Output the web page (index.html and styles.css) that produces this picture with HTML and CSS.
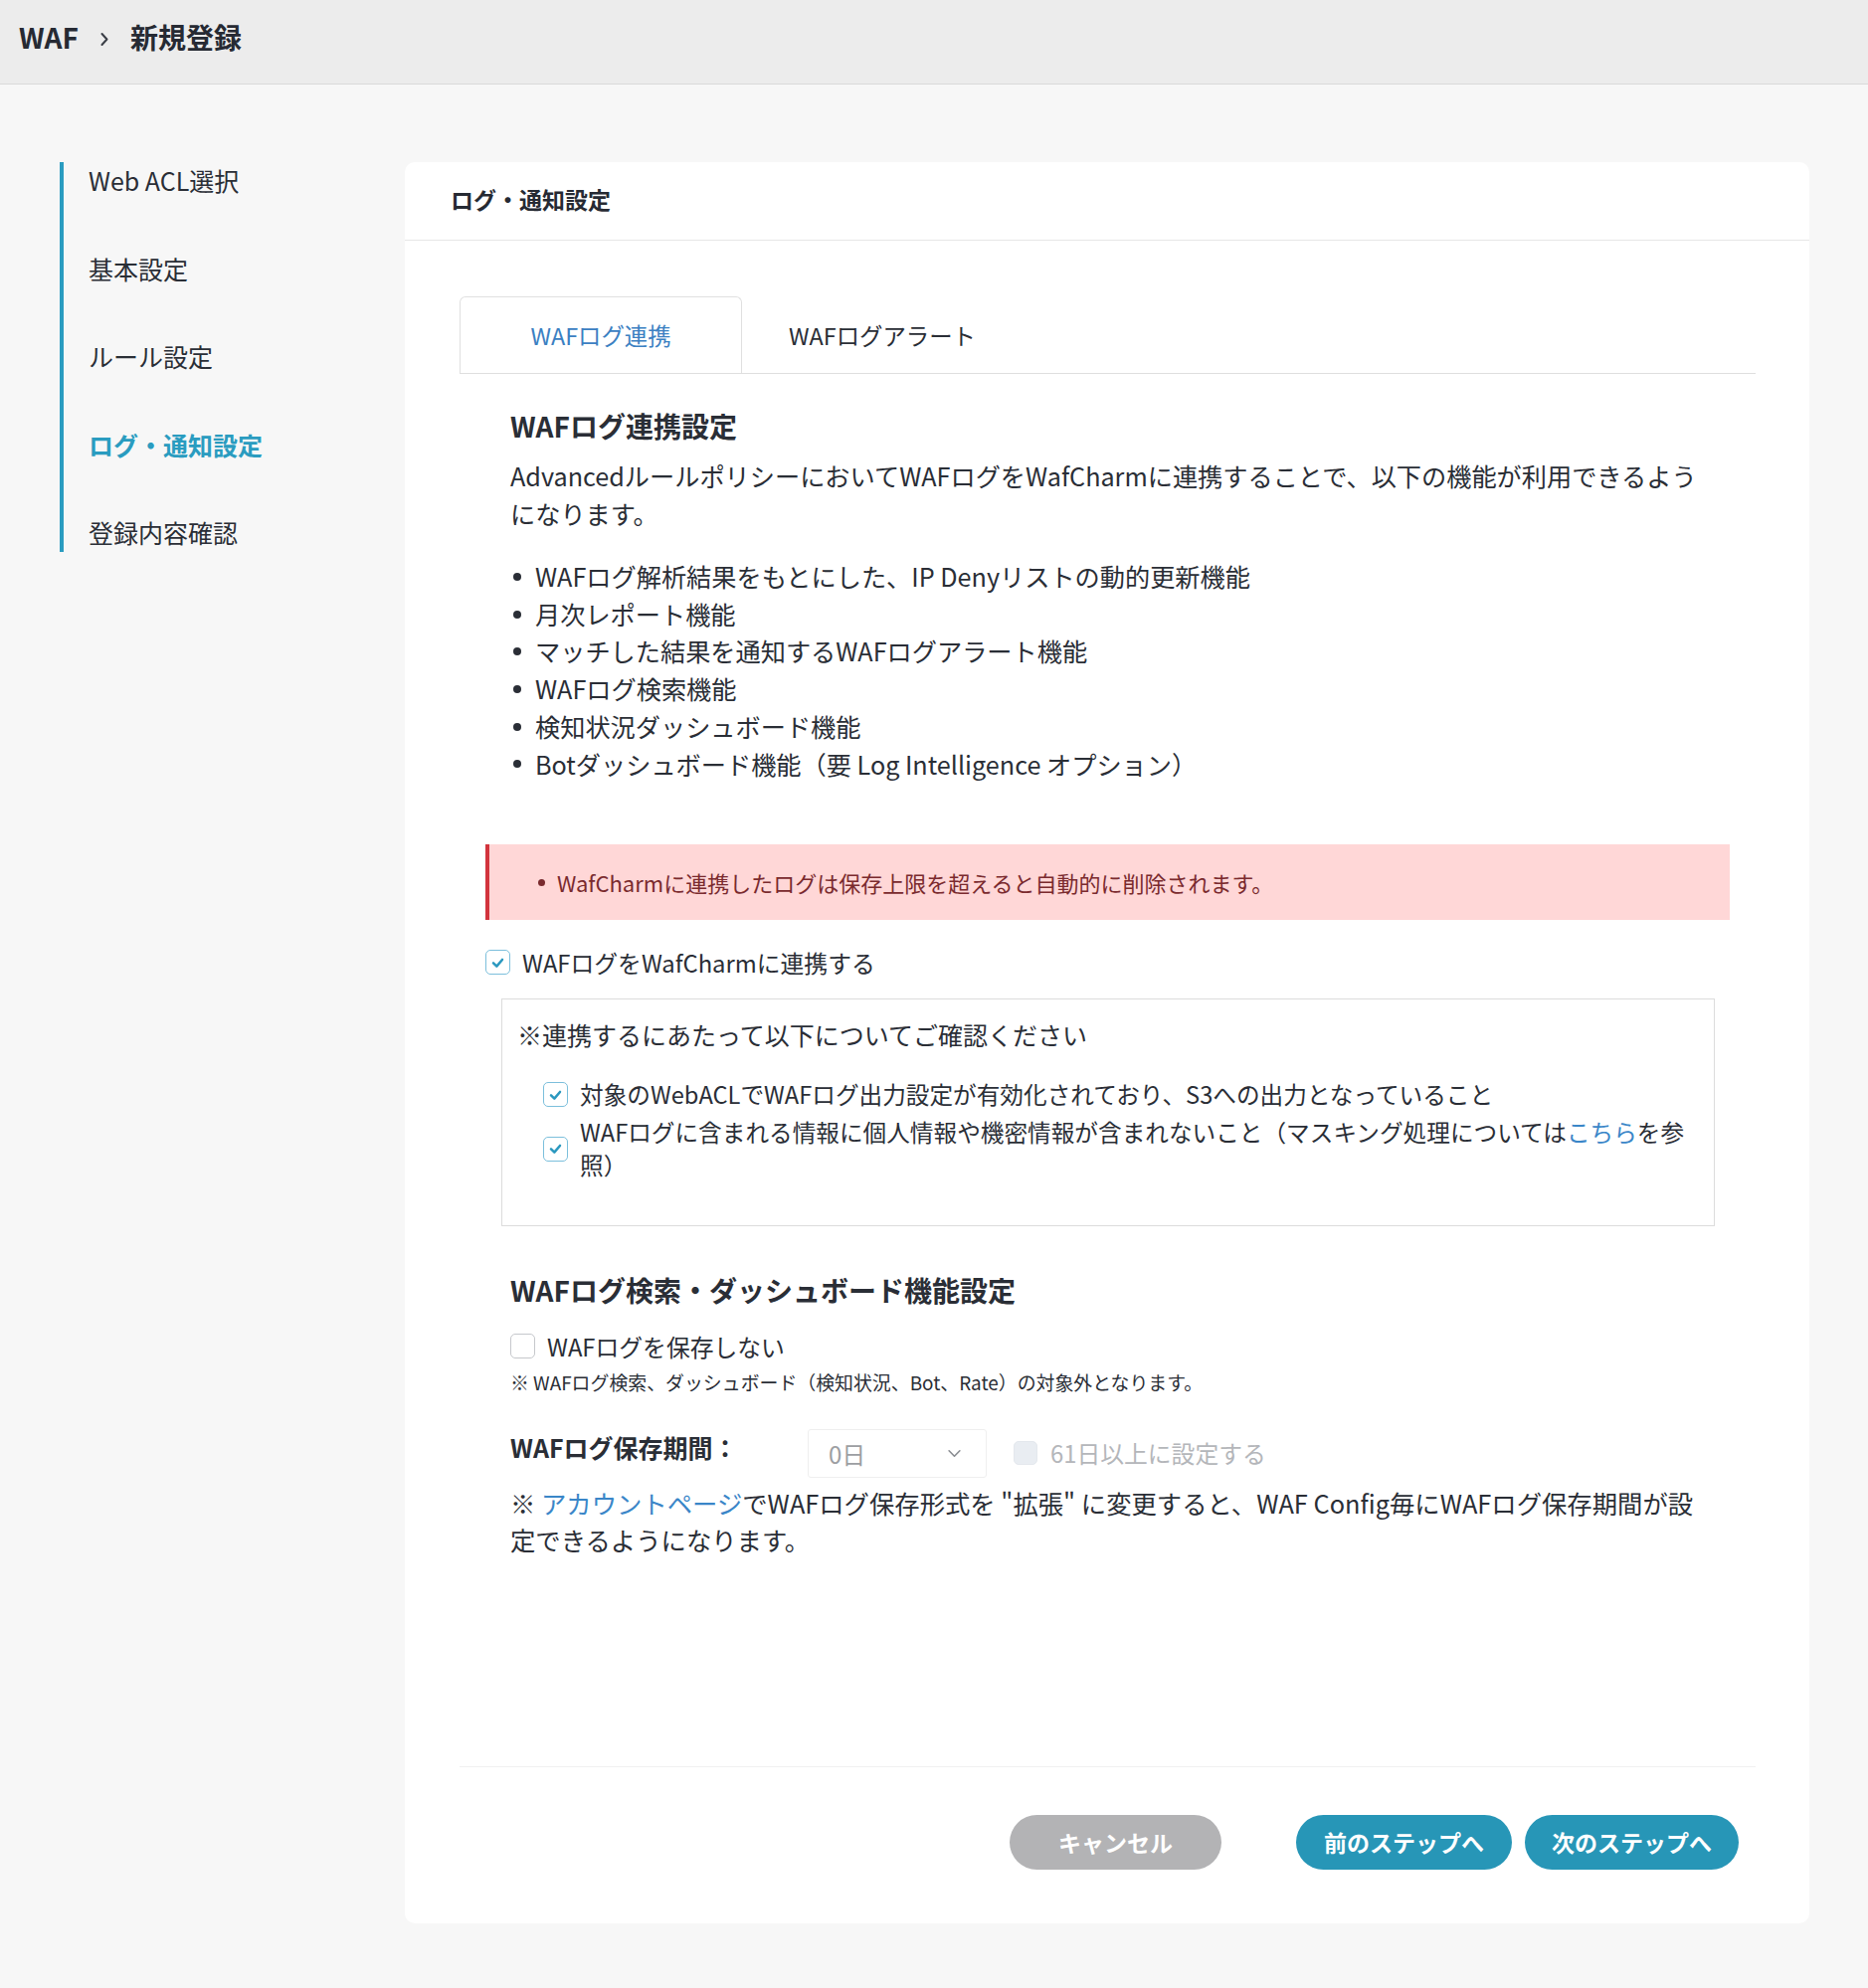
FILE: index.html
```html
<!DOCTYPE html>
<html lang="ja">
<head>
<meta charset="utf-8">
<title>WAF 新規登録</title>
<link rel="stylesheet" href="styles.css">
</head>
<body>
<header class="topbar">
  <span class="crumb">WAF</span>
  <svg class="sep" viewBox="0 0 10 16" width="10" height="16"><polyline points="2.5,3 7.5,8.5 2.5,14" fill="none" stroke="#3a3e46" stroke-width="2" stroke-linecap="round" stroke-linejoin="round"/></svg>
  <span class="crumb">新規登録</span>
</header>
<div class="layout">
  <nav class="steps">
    <ul>
      <li>Web ACL選択</li>
      <li>基本設定</li>
      <li>ルール設定</li>
      <li class="active">ログ・通知設定</li>
      <li>登録内容確認</li>
    </ul>
  </nav>
  <main class="card">
    <div class="card-head">ログ・通知設定</div>
    <div class="card-body">
      <div class="tabs">
        <div class="tab active">WAFログ連携</div>
        <div class="tab">WAFログアラート</div>
      </div>
      <div class="panel">
        <section class="sec">
          <h2>WAFログ連携設定</h2>
          <p class="para">AdvancedルールポリシーにおいてWAFログをWafCharmに連携することで、以下の機能が利用できるようになります。</p>
          <ul class="bullets">
            <li>WAFログ解析結果をもとにした、IP Denyリストの動的更新機能</li>
            <li>月次レポート機能</li>
            <li>マッチした結果を通知するWAFログアラート機能</li>
            <li>WAFログ検索機能</li>
            <li>検知状況ダッシュボード機能</li>
            <li>Botダッシュボード機能（要 Log Intelligence オプション）</li>
          </ul>
        </section>
        <div class="alert">
          <ul>
            <li>WafCharmに連携したログは保存上限を超えると自動的に削除されます。</li>
          </ul>
        </div>
        <label class="check main-check"><span class="cb on"><svg viewBox="0 0 24 24" width="24" height="24"><polyline points="7.3,12.3 10.8,15.8 16.7,8.8" fill="none" stroke="#2a98bf" stroke-width="2.6" stroke-linecap="round" stroke-linejoin="round"/></svg></span><span>WAFログをWafCharmに連携する</span></label>
        <div class="confirm">
          <p class="confirm-title">※連携するにあたって以下についてご確認ください</p>
          <ul class="checklist">
            <li><span class="cb on"><svg viewBox="0 0 24 24" width="24" height="24"><polyline points="7.3,12.3 10.8,15.8 16.7,8.8" fill="none" stroke="#2a98bf" stroke-width="2.6" stroke-linecap="round" stroke-linejoin="round"/></svg></span><span>対象のWebACLでWAFログ出力設定が有効化されており、S3への出力となっていること</span></li>
            <li><span class="cb on"><svg viewBox="0 0 24 24" width="24" height="24"><polyline points="7.3,12.3 10.8,15.8 16.7,8.8" fill="none" stroke="#2a98bf" stroke-width="2.6" stroke-linecap="round" stroke-linejoin="round"/></svg></span><span>WAFログに含まれる情報に個人情報や機密情報が含まれないこと（マスキング処理については<a class="link" href="#">こちら</a>を参照）</span></li>
          </ul>
        </div>
        <section class="sec sec2">
          <h2>WAFログ検索・ダッシュボード機能設定</h2>
          <label class="check store-check"><span class="cb"></span><span>WAFログを保存しない</span></label>
          <p class="small">※ WAFログ検索、ダッシュボード（検知状況、Bot、Rate）の対象外となります。</p>
          <div class="period">
            <span class="plabel">WAFログ保存期間：</span>
            <div class="select"><span>0日</span><svg viewBox="0 0 16 10" width="15" height="9"><polyline points="2,2 8,8 14,2" fill="none" stroke="#8a8d92" stroke-width="1.8" stroke-linecap="round" stroke-linejoin="round"/></svg></div>
            <label class="check disabled"><span class="cb dis"></span><span>61日以上に設定する</span></label>
          </div>
          <p class="note">※ <a class="link" href="#">アカウントページ</a>でWAFログ保存形式を "拡張" に変更すると、WAF Config毎にWAFログ保存期間が設定できるようになります。</p>
        </section>
      </div>
      <div class="actions">
        <button class="btn gray">キャンセル</button>
        <button class="btn teal prev">前のステップへ</button>
        <button class="btn teal next">次のステップへ</button>
      </div>
    </div>
  </main>
</div>
</body>
</html>
```

FILE: styles.css
```css
* { box-sizing: border-box; }

html, body {
  margin: 0;
  padding: 0;
}

body {
  font-family: "Noto Sans CJK JP", "Noto Sans", sans-serif;
  color: #2a2e36;
  background: #f7f7f7;
  min-height: 1999px;
}

ul { margin: 0; padding: 0; list-style: none; }
p { margin: 0; }
h2 { margin: 0; }

.topbar {
  height: 85px;
  background: #ececec;
  border-bottom: 1px solid #d9d9d9;
  display: flex;
  align-items: center;
  padding-left: 19px;
  padding-bottom: 10px;
  font-size: 28px;
  font-weight: 700;
  color: #262a33;
}

.sep {
  display: block;
  flex: none;
  margin: 4px 21px 0 21px;
}

.layout {
  display: flex;
  padding: 78px 59px 65px 60px;
}

.steps {
  width: 347px;
  flex: none;
}

.steps ul {
  border-left: 4px solid #2a9cc0;
  display: flex;
  flex-direction: column;
  gap: 51px;
}

.steps li {
  padding-left: 25px;
  font-size: 25px;
  line-height: 37.5px;
  color: #2a2e36;
}

.steps li.active {
  color: #2a9cc0;
  font-weight: 700;
}

.card {
  flex: 1;
  background: #fff;
  border-radius: 10px;
  min-height: 1771px;
}

.card-head {
  height: 79px;
  border-bottom: 1px solid #e6e6e6;
  padding-left: 46px;
  padding-bottom: 4px;
  display: flex;
  align-items: center;
  font-size: 23px;
  font-weight: 700;
  color: #262a33;
}

.card-body {
  padding: 56px 54px 53px 55px;
}

.tabs {
  display: flex;
  height: 78px;
  border-bottom: 1px solid #dedede;
}

.tab {
  display: flex;
  align-items: center;
  font-size: 23.4px;
  color: #2a2e36;
}

.tab.active {
  width: 284px;
  justify-content: center;
  border: 1px solid #e0e0e0;
  border-bottom: none;
  border-radius: 6px 6px 0 0;
  color: #3b80c2;
}

.tab + .tab {
  padding-left: 47px;
}

.panel {
  padding: 31px 26px 209px;
}

.sec {
  padding: 0 25px;
}

.sec h2 {
  font-size: 28px;
  line-height: 42px;
  font-weight: 700;
  color: #2a2e36;
}

.para {
  margin-top: 11px;
  font-size: 25.2px;
  line-height: 37.5px;
}

.bullets {
  margin-top: 26px;
}

.bullets li {
  font-size: 25.2px;
  line-height: 37.7px;
  display: flex;
  align-items: center;
}

.bullets li::before {
  content: "";
  width: 8px;
  height: 8px;
  border-radius: 50%;
  background: #2a2e36;
  margin: 0 14px 0 3px;
  flex: none;
}

.alert {
  margin-top: 62px;
  height: 76px;
  background: #ffd7d7;
  border-left: 4px solid #d2343d;
  display: flex;
  align-items: center;
  padding-left: 49px;
}

.alert li {
  display: flex;
  align-items: center;
  font-size: 22px;
  line-height: 33px;
  color: #7a2a2e;
}

.alert li::before {
  content: "";
  width: 7px;
  height: 7px;
  border-radius: 50%;
  background: #7a2a2e;
  margin-right: 12px;
  flex: none;
}

.check {
  display: flex;
  align-items: center;
  gap: 12px;
  font-size: 23.8px;
  line-height: 37.5px;
}

.cb {
  width: 25px;
  height: 25px;
  flex: none;
  border: 1.5px solid #c6c8cc;
  border-radius: 5px;
  background: #fff;
  display: flex;
  align-items: center;
  justify-content: center;
}

.cb svg { display: block; }

.cb.on {
  border-color: #7cbfdc;
}

.cb.dis {
  width: 24px;
  height: 24px;
  background: #e9edf2;
  border-color: #e4e8ed;
}

.main-check {
  margin-top: 24px;
}

.confirm {
  margin: 17px 15px 0 16px;
  border: 1px solid #dcdcdc;
  padding: 17px 15px 44px;
}

.confirm-title {
  font-size: 25px;
  line-height: 37.5px;
}

.checklist {
  margin-top: 25px;
  padding-left: 26px;
  display: flex;
  flex-direction: column;
  gap: 5px;
}

.checklist li {
  display: flex;
  align-items: center;
  gap: 12px;
  font-size: 23.65px;
  line-height: 33px;
}

.link {
  color: #3a86c8;
  text-decoration: none;
}

.sec2 {
  margin-top: 43px;
}

.store-check {
  margin-top: 17px;
}

.small {
  margin-top: 3px;
  font-size: 18.9px;
  line-height: 27px;
}

.period {
  margin-top: 34px;
  display: flex;
  align-items: flex-start;
}

.plabel {
  width: 299px;
  font-size: 25px;
  line-height: 37.5px;
  font-weight: 700;
}

.select {
  width: 180px;
  height: 49px;
  border: 1px solid #efefef;
  border-radius: 3px;
  display: flex;
  align-items: center;
  justify-content: space-between;
  padding: 0 24px 0 20px;
  font-size: 24px;
  color: #9c9ea2;
}

.check.disabled {
  height: 49px;
  margin-left: 27px;
  color: #b4b6ba;
  gap: 13px;
}

.note {
  margin-top: 7px;
  font-size: 25.35px;
  line-height: 37px;
}

.actions {
  border-top: 1px solid #f0f0f0;
  padding: 48px 17px 0 0;
  display: flex;
  justify-content: flex-end;
}

.btn {
  height: 55px;
  border: none;
  border-radius: 28px;
  font-family: "Noto Sans CJK JP", "Noto Sans", sans-serif;
  font-size: 23px;
  font-weight: 700;
  color: #fff;
  padding: 0;
}

.btn.gray {
  width: 213px;
  background: #b3b3b5;
  margin-right: 75px;
}

.btn.teal {
  background: #2796b7;
}

.btn.prev {
  width: 217px;
  margin-right: 13px;
}

.btn.next {
  width: 215px;
}
```
